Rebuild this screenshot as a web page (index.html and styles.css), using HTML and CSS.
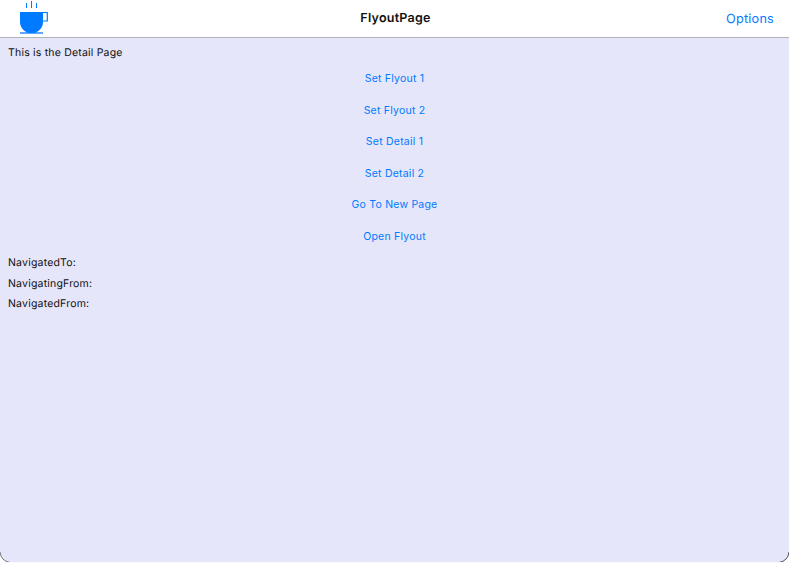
FILE: index.html
```html
<!DOCTYPE html>
<html lang="en">
<head>
<meta charset="utf-8">
<title>FlyoutPage</title>
<link rel="stylesheet" href="styles.css">
</head>
<body>
<div class="window">
<header class="bar">
<svg class="cup" viewBox="0 0 30 36" aria-hidden="true">
<path d="M7.500 3v5M12.500 1v7M17.500 3v5" stroke="#007aff" fill="none"/>
<path d="M1 12h23v10c0 5-3 8.500-8 11H9c-5-2.500-8-6-8-11z" fill="#007aff"/>
<path d="M24 12.500h4.300v8.500H24" stroke="#007aff" stroke-width="1.200" fill="none"/>
<path d="M1 33h23" stroke="#007aff" stroke-width="1.300"/>
</svg>
<h1 class="title">FlyoutPage</h1>
<span class="options">Options</span>
</header>
<main class="detail">
<p class="label">This is the Detail Page</p>
<button class="action">Set Flyout 1</button>
<button class="action">Set Flyout 2</button>
<button class="action">Set Detail 1</button>
<button class="action">Set Detail 2</button>
<button class="action">Go To New Page</button>
<button class="action">Open Flyout</button>
<p class="label">NavigatedTo:</p>
<p class="label">NavigatingFrom:</p>
<p class="label">NavigatedFrom:</p>
</main>
<svg class="corner left" viewBox="0 0 12 12" aria-hidden="true"><path class="outside" d="M0 1Q1 10 10 11.500H12V12H0z"/><path class="edge" d="M0 1Q1 10 10 11.500"/></svg>
<svg class="corner right" viewBox="0 0 12 12" aria-hidden="true"><path class="outside" d="M12 1Q11 10 2 11.500H0V12H12z"/><path class="edge" d="M12 1Q11 10 2 11.500"/></svg>
</div>
</body>
</html>
```
FILE: styles.css
```css
* { box-sizing: border-box; }
body { margin: 0; background: #fff; font-family: Inter, sans-serif; text-rendering: geometricPrecision; }
.window { position: relative; height: 563px; display: flex; flex-direction: column; overflow: hidden; border-bottom: 1px solid #fafafe; background: #e6e6fa; }
.bar { height: 38px; display: grid; grid-template-columns: 1fr auto 1fr; align-items: center; padding: 0 15px 0 19px; background: #fff; border-bottom: 1px solid #b2b2b8; }
.cup { width: 30px; height: 36px; margin-top: -1px; }
.title { margin: 0 2px 0 0; font-size: 12.5px; font-weight: 600; letter-spacing: 0.25px; color: #111; }
.options { justify-self: end; margin-top: 2px; font-size: 12.7px; letter-spacing: 0.2px; color: #007aff; }
.detail { flex: 1; display: flex; flex-direction: column; padding: 4.5px 8px; }
.label { margin: 0; height: 20.8px; line-height: 20.8px; font-size: 10.5px; letter-spacing: 0.2px; color: #111; }
.action { height: 31.6px; padding: 0 0 1.2px; border: 0; background: none; font: 10.5px Inter, sans-serif; letter-spacing: 0.22px; color: #007aff; }
.corner { position: absolute; bottom: -1px; width: 12px; height: 12px; }
.left { left: 0; }
.right { right: 0; }
.outside { fill: #fff; }
.edge { fill: none; stroke: #77777f; stroke-width: 1; }
.right .edge { stroke: #50505a; }
```
